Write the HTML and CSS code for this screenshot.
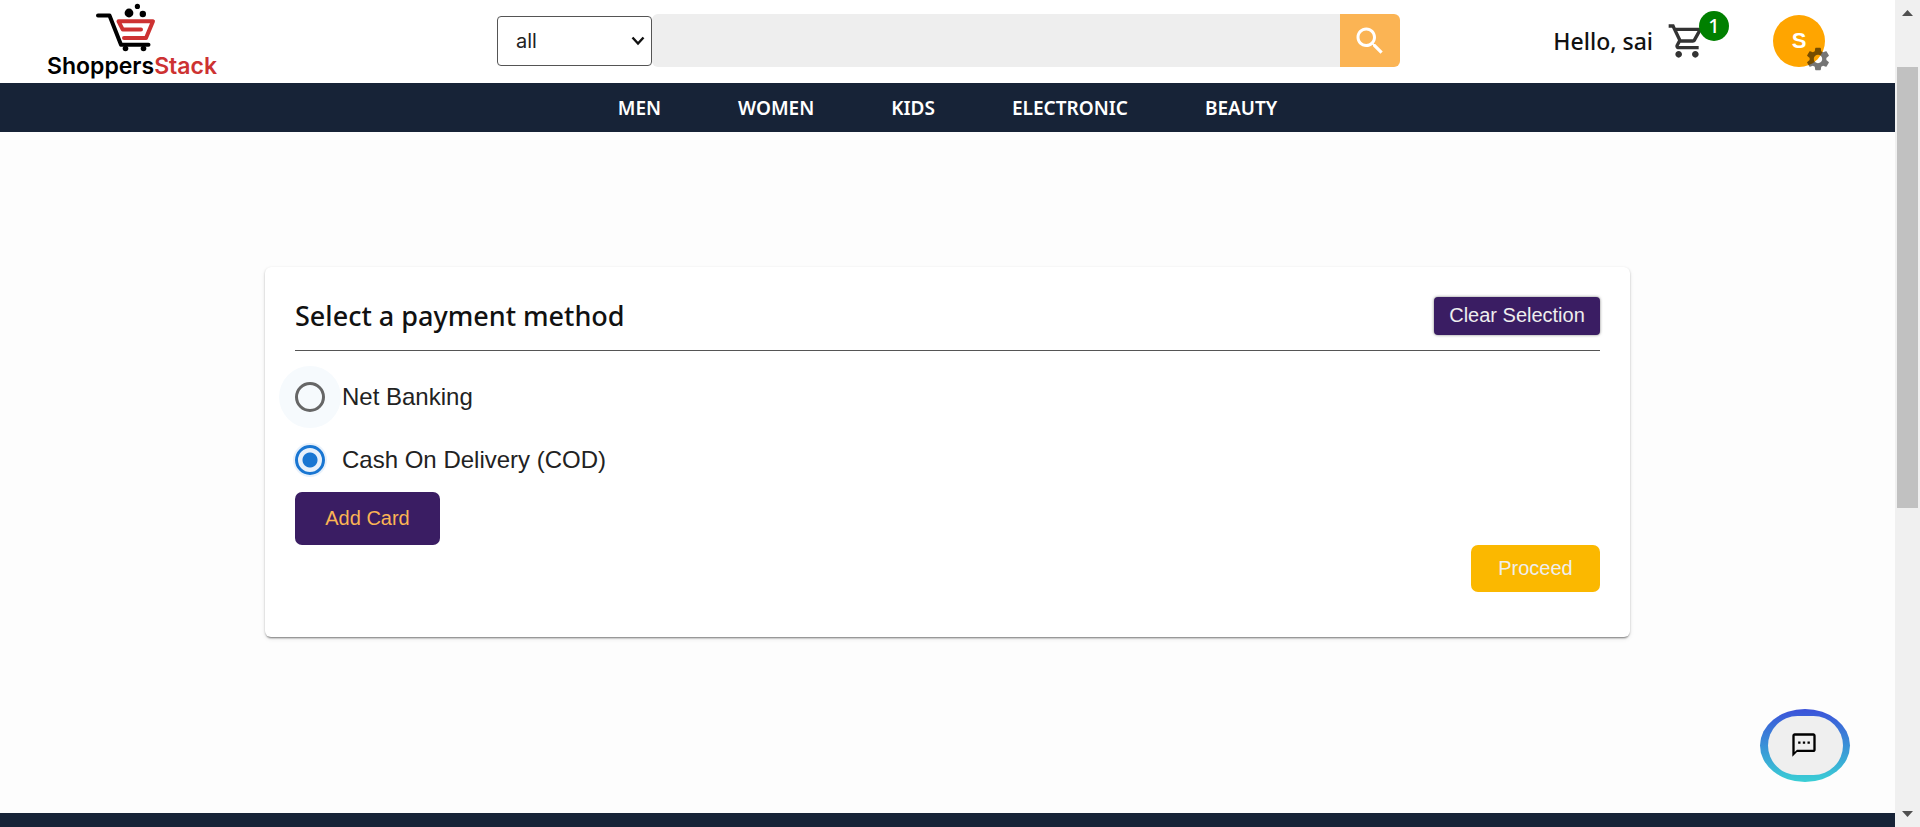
FILE: index.html
```html
<!DOCTYPE html>
<html lang="en">
<head>
<meta charset="utf-8">
<title>ShoppersStack - Payment</title>
<link rel="stylesheet" href="styles.css">
</head>
<body>
<div class="page">
  <header class="header">
    <a class="brand" href="#">
      <svg class="brand-icon" viewBox="47 3 172 50" aria-hidden="true">
        <path d="M98 15.5H109.5L121 44.7H148.500" fill="none" stroke="#000" stroke-width="4" stroke-linecap="round" stroke-linejoin="round"/>
        <circle cx="125.5" cy="48.5" r="2.8"/><circle cx="143.5" cy="48.5" r="2.8"/>
        <circle cx="129" cy="13" r="4.4"/><circle cx="137.4" cy="6.4" r="2.6"/><circle cx="142.8" cy="14" r="3.2"/>
        <path d="M124 38H146L153 21.3H118.5L122.8 29.6H141" fill="none" stroke="#cd3232" stroke-width="4" stroke-linecap="round" stroke-linejoin="round"/>
      </svg>
      <span class="brand-name">Shoppers<span class="brand-accent">Stack</span></span>
    </a>
    <form class="search">
      <div class="category">
        <select class="category-select" aria-label="Category"><option>all</option></select>
        <svg class="category-arrow" viewBox="0 0 14 10" width="14" height="10" aria-hidden="true"><path d="M1.500 1.500L7 7.500L12.500 1.500" fill="none" stroke="#111" stroke-width="2.400"/></svg>
      </div>
      <input class="search-input" type="text" aria-label="Search products">
      <button class="search-button" type="button" aria-label="Search">
        <svg viewBox="0 0 24 24" width="36" height="36" fill="#fff"><path d="M15.5 14h-.79l-.28-.27C15.41 12.59 16 11.11 16 9.5 16 5.91 13.09 3 9.5 3S3 5.91 3 9.5 5.91 16 9.5 16c1.61 0 3.09-.59 4.23-1.57l.27.28v.79l5 4.99L20.49 19l-4.99-5zm-6 0C7.01 14 5 11.99 5 9.5S7.01 5 9.5 5 14 7.01 14 9.5 11.99 14 9.5 14z"/></svg>
      </button>
    </form>
    <div class="account">
      <span class="greeting">Hello, sai</span>
      <a class="cart" href="#" aria-label="Cart">
        <svg viewBox="0 0 24 24" width="40" height="40" fill="#333"><path d="M15.55 13c.75 0 1.41-.41 1.75-1.03l3.58-6.49c.37-.66-.11-1.48-.87-1.48H5.21l-.94-2H1v2h2l3.6 7.59-1.35 2.44C4.52 15.37 5.48 17 7 17h12v-2H7l1.1-2h7.45zM6.16 6h12.15l-2.76 5H8.53L6.16 6zM7 18c-1.1 0-1.99.9-1.99 2S5.9 22 7 22s2-.9 2-2-.9-2-2-2zm10 0c-1.1 0-1.99.9-1.99 2s.89 2 1.99 2 2-.9 2-2-.9-2-2-2z"/></svg>
        <span class="cart-count">1</span>
      </a>
      <button class="avatar" type="button" aria-label="Account settings">S
        <svg class="avatar-gear" viewBox="0 0 24 24" width="28" height="28" fill="#000" fill-opacity=".54"><path d="M19.14 12.94c.04-.3.06-.61.06-.94 0-.32-.02-.64-.07-.94l2.03-1.58c.18-.14.23-.41.12-.61l-1.92-3.32c-.12-.22-.37-.29-.59-.22l-2.39.96c-.5-.38-1.03-.7-1.62-.94l-.36-2.54c-.04-.24-.24-.41-.48-.41h-3.84c-.24 0-.43.17-.47.41l-.36 2.54c-.59.24-1.13.57-1.62.94l-2.39-.96c-.22-.08-.47 0-.59.22L2.74 8.87c-.12.21-.08.47.12.61l2.03 1.58c-.05.3-.09.63-.09.94s.02.64.07.94l-2.03 1.58c-.18.14-.23.41-.12.61l1.92 3.32c.12.22.37.29.59.22l2.39-.96c.5.38 1.03.7 1.62.94l.36 2.54c.05.24.24.41.48.41h3.84c.24 0 .44-.17.47-.41l.36-2.54c.59-.24 1.13-.56 1.62-.94l2.39.96c.22.08.47 0 .59-.22l1.92-3.32c.12-.22.07-.47-.12-.61l-2.01-1.58zM12 15.6c-1.98 0-3.6-1.62-3.6-3.6s1.62-3.6 3.6-3.6 3.6 1.62 3.6 3.6-1.62 3.6-3.6 3.6z"/></svg>
      </button>
    </div>
  </header>
  <nav class="nav">
    <a href="#">MEN</a>
    <a href="#">WOMEN</a>
    <a href="#">KIDS</a>
    <a href="#">ELECTRONIC</a>
    <a href="#">BEAUTY</a>
  </nav>
  <main class="main">
    <section class="card">
      <div class="card-head">
        <h1 class="card-title">Select a payment method</h1>
        <button class="clear" type="button">Clear Selection</button>
      </div>
      <label class="option"><input class="radio radio-hover" type="radio" name="payment">Net Banking</label>
      <label class="option"><input class="radio" type="radio" name="payment" checked>Cash On Delivery (COD)</label>
      <button class="add-card" type="button">Add Card</button>
      <button class="proceed" type="button">Proceed</button>
    </section>
  </main>
  <footer class="footer"></footer>
  <button class="chat" type="button" aria-label="Open chat">
    <span class="chat-inner">
      <svg viewBox="0 0 24 24" width="28" height="28"><path d="M20 2H4c-1.1 0-2 .9-2 2v18l4-4h14c1.1 0 2-.9 2-2V4c0-1.100-.9-2-2-2zm0 14H6l-2 2V4h16v12zM7 9h2v2H7zm4 0h2v2h-2zm4 0h2v2h-2z"/></svg>
    </span>
  </button>
</div>
<div class="scrollbar" aria-hidden="true">
  <svg viewBox="0 0 25 25" width="25" height="25"><path d="M7 16L12.500 10L18 16z" fill="#505050"/></svg>
  <div class="scroll-track"><div class="scroll-thumb"></div></div>
  <svg viewBox="0 0 25 25" width="25" height="25"><path d="M7 9L12.500 15L18 9z" fill="#505050"/></svg>
</div>
</body>
</html>
```

FILE: styles.css
```css
* { box-sizing: border-box; }

body {
  margin: 0;
  display: flex;
  height: 100vh;
  background: #fdfdfd;
  color: #111;
  font-family: "Liberation Sans", Arial, sans-serif;
}

button { padding: 0; border: 0; font: inherit; cursor: pointer; }
a { color: inherit; text-decoration: none; }

.page {
  position: relative;
  flex: 1;
  min-width: 0;
  display: flex;
  flex-direction: column;
}

.header {
  display: flex;
  align-items: center;
  height: 83px;
  padding: 0 70px 2px 47px;
  background: #fff;
}

.brand { display: flex; flex-direction: column; width: 174px; }
.brand-icon { width: 172px; height: 50px; }
.brand-name {
  color: #000;
  font: 600 23px/26px Inter, sans-serif;
}
.brand-accent { color: #cd3232; }

.search { display: flex; flex: 1; align-items: center; margin: 0 153px 0 276px; }
.category { position: relative; display: flex; width: 155px; }
.category-select {
  appearance: none;
  width: 100%;
  height: 50px;
  padding: 0 30px 0 18px;
  border: 1px solid #555;
  border-radius: 4px;
  background: #fff;
  color: #222;
  font: 20px Inter, sans-serif;
}
.category-arrow { position: absolute; top: 20px; right: 7px; pointer-events: none; }
.search-input {
  flex: 1;
  min-width: 0;
  height: 53px;
  padding: 0 16px;
  border: 0;
  border-radius: 6px 0 0 6px;
  background: #eee;
  font-size: 20px;
}
.search-button {
  display: grid;
  place-items: center;
  width: 60px;
  height: 53px;
  border-radius: 0 6px 6px 0;
  background: #fbb454;
}

.account { display: flex; align-items: center; }
.greeting { font: 500 23px/30px "Noto Sans", sans-serif; }
.cart { position: relative; display: flex; margin: 0 66px 0 14px; }
.cart-count {
  position: absolute;
  top: -10px;
  right: -22px;
  width: 30px;
  height: 30px;
  border-radius: 50%;
  background: green;
  color: #fff;
  font: 500 20px/30px "Noto Sans", sans-serif;
  text-align: center;
}
.avatar {
  position: relative;
  width: 52px;
  height: 52px;
  border-radius: 50%;
  background: orange;
  color: #fff;
  font-size: 22px;
  font-weight: 700;
}
.avatar-gear { position: absolute; right: -7px; bottom: -6px; }

.nav {
  display: flex;
  align-items: center;
  justify-content: center;
  gap: 77px;
  height: 49px;
  background: #172337;
  color: #fff;
  font: 600 19px/24px "Noto Sans", sans-serif;
}

.main { flex: 1; padding: 135px 265px 0; }
.card {
  display: flex;
  flex-direction: column;
  align-items: flex-start;
  padding: 30px 30px 45px;
  border-radius: 6px;
  background: #fff;
  box-shadow: 0 3px 2px -2px rgba(0, 0, 0, .3), 0 1px 2px rgba(0, 0, 0, .25), 0 2px 5px rgba(0, 0, 0, .08);
}
.card-head {
  display: flex;
  align-items: center;
  justify-content: space-between;
  width: 100%;
  margin-bottom: 14px;
  padding-bottom: 15px;
  border-bottom: 1px solid #555;
}
.card-title { margin: 0; font: 500 27px/38px "Noto Sans", sans-serif; }
.clear {
  width: 166px;
  height: 38px;
  padding-bottom: 2px;
  border-radius: 4px;
  background: #3a1d63;
  box-shadow: 0 0 3px rgba(0, 0, 0, .5);
  color: #eee;
  font-size: 20px;
}

.option { display: flex; align-items: center; gap: 17px; height: 63px; color: #222; font-size: 24px; }
.radio {
  appearance: none;
  width: 30px;
  height: 30px;
  margin: 0;
  border: 3px solid #666;
  border-radius: 50%;
}
.radio-hover { background: #f6fafd; box-shadow: 0 0 0 16px #f6fafd; }
.radio:checked {
  border-color: #1976d2;
  background: radial-gradient(circle, #1976d2 7px, #e8f1fb 8px);
  box-shadow: 0 0 0 2px #e8f1fb;
}

.add-card {
  width: 145px;
  height: 53px;
  margin-top: 1px;
  border-radius: 7px;
  background: #3a1d63;
  color: #fbb454;
  font-size: 20px;
}
.proceed {
  align-self: flex-end;
  width: 129px;
  height: 47px;
  border-radius: 7px;
  background: #fbb800;
  color: #eee;
  font-size: 20px;
}

.footer { height: 14px; background: #172337; }

.chat {
  position: absolute;
  right: 45px;
  bottom: 45px;
  width: 90px;
  height: 73px;
  padding: 7px 7px 7px 8px;
  border-radius: 50%;
  background: linear-gradient(#3b52d9, #3acfd5);
}
.chat-inner {
  display: grid;
  place-items: center;
  height: 100%;
  padding: 0 4px 2px 0;
  border-radius: 30px;
  background: #efefef;
}

.scrollbar { display: flex; flex-direction: column; width: 25px; background: #f0f0f0; }
.scroll-track { flex: 1; padding: 42px 2px 0; }
.scroll-thumb { height: 60%; background: #c1c1c1; }
```
